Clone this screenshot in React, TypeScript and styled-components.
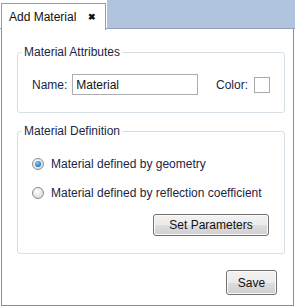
import React, { useState } from "react";
import styled, { createGlobalStyle } from "styled-components";

const GlobalStyle = createGlobalStyle`
  html, body {
    margin: 0;
    padding: 0;
    background: #fff;
  }
  body {
    font-family: "Liberation Sans", Arial, sans-serif;
    font-size: 12px;
    color: #1c2545;
  }
`;

const Window = styled.div`
  width: 295px;
  height: 306px;
  display: flex;
  flex-direction: column;
  box-sizing: border-box;
`;

const TabBar = styled.div`
  display: flex;
  height: 29px;
  flex-shrink: 0;
  padding-top: 3px;
  padding-left: 1px;
  box-sizing: border-box;
  background: linear-gradient(#ffffff 0, #ffffff 0) no-repeat left / 107px 100%,
    #b0c4de;
  border-bottom: 1px solid #8fa0b8;
`;

const Tab = styled.div`
  width: 105px;
  height: 27px;
  box-sizing: border-box;
  background: #fff;
  border: 1px solid #9a9a9a;
  border-bottom: none;
  display: flex;
  align-items: center;
  padding: 0 0 0 7px;
  gap: 12px;
  color: #111;
  position: relative;
  z-index: 1;
  margin-bottom: -1px;
`;

const CloseGlyph = styled.span`
  font-weight: bold;
  font-size: 9px;
  line-height: 1;
  color: #111;
  cursor: pointer;
  padding-top: 1px;
`;

const Panel = styled.div`
  flex: 1;
  margin: 0 1px 0 1px;
  border: 1px solid #8e8e8e;
  border-top: none;
  background: #fff;
  display: flex;
  flex-direction: column;
  padding: 16px 8px 0 15px;
`;

const Group = styled.fieldset<{ $top?: number }>`
  margin: ${(p) => p.$top ?? 0}px 0 0 0;
  padding: 15px 14px 17px 14px;
  border: 1px solid #d5dfe5;
  border-radius: 3px;
  min-width: 0;
`;

const Legend = styled.legend`
  padding: 0 2px;
  margin-left: -10px;
  line-height: 14px;
  color: #1c2545;
`;

const Row = styled.div`
  display: flex;
  align-items: center;
`;

const Label = styled.label`
  margin-right: 5px;
`;

const TextInput = styled.input`
  width: 126px;
  height: 21px;
  box-sizing: border-box;
  border: 1px solid #abadb3;
  padding: 0 3px;
  font-family: inherit;
  font-size: 12px;
  color: #111;
  outline: none;
`;

const Spacer = styled.div`
  flex: 1;
`;

const ColorSwatch = styled.div<{ $color: string }>`
  width: 16px;
  height: 16px;
  box-sizing: border-box;
  border: 1px solid #a9a9a9;
  background: ${(p) => p.$color};
  margin-left: 1px;
`;

const RadioList = styled.div`
  display: flex;
  flex-direction: column;
  gap: 13px;
  padding-top: 3px;
`;

const RadioRow = styled.label`
  display: flex;
  align-items: center;
  height: 16px;
  gap: 7px;
  cursor: pointer;
`;

const RadioDot = styled.span<{ $checked: boolean }>`
  width: 12px;
  height: 12px;
  box-sizing: border-box;
  border-radius: 50%;
  border: 1px solid #8d8d8d;
  background: radial-gradient(circle at 40% 35%, #ffffff 0, #e6e6e6 55%, #cfcfcf 100%);
  display: flex;
  align-items: center;
  justify-content: center;

  &::after {
    content: "";
    display: ${(p) => (p.$checked ? "block" : "none")};
    width: 6px;
    height: 6px;
    border-radius: 50%;
    background: radial-gradient(circle at 40% 35%, #7fd0f5 0, #2a8ad4 55%, #0d4f8f 100%);
  }
`;

const ButtonBar = styled.div<{ $top?: number; $right?: number }>`
  display: flex;
  justify-content: flex-end;
  margin-top: ${(p) => p.$top ?? 0}px;
  margin-right: ${(p) => p.$right ?? 0}px;
`;

const Button = styled.button<{ $w: number; $h: number }>`
  width: ${(p) => p.$w}px;
  height: ${(p) => p.$h}px;
  box-sizing: border-box;
  border: 1px solid #707070;
  border-radius: 3px;
  background: linear-gradient(#f2f2f2 0%, #ebebeb 50%, #dddddd 51%, #cfcfcf 100%);
  box-shadow: inset 0 0 0 1px #fbfbfb;
  font-family: inherit;
  font-size: 12px;
  color: #111;
  padding: 0;
  cursor: pointer;
`;

export default function App() {
  const [mode, setMode] = useState("geometry");
  const [name, setName] = useState("Material");

  return (
    <>
      <GlobalStyle />
      <Window>
        <TabBar>
          <Tab>
            Add Material
            <CloseGlyph>✖</CloseGlyph>
          </Tab>
        </TabBar>
        <Panel>
          <Group>
            <Legend>Material Attributes</Legend>
            <Row>
              <Label>Name:</Label>
              <TextInput value={name} onChange={(e) => setName(e.target.value)} />
              <Spacer />
              <Label>Color:</Label>
              <ColorSwatch $color="#ffffff" />
            </Row>
          </Group>
          <Group $top={11}>
            <Legend>Material Definition</Legend>
            <RadioList>
              <RadioRow onClick={() => setMode("geometry")}>
                <RadioDot $checked={mode === "geometry"} />
                Material defined by geometry
              </RadioRow>
              <RadioRow onClick={() => setMode("reflection")}>
                <RadioDot $checked={mode === "reflection"} />
                Material defined by reflection coefficient
              </RadioRow>
              <ButtonBar $right={1}>
                <Button $w={116} $h={22}>Set Parameters</Button>
              </ButtonBar>
            </RadioList>
          </Group>
          <ButtonBar $top={16} $right={8}>
            <Button $w={51} $h={25}>Save</Button>
          </ButtonBar>
        </Panel>
      </Window>
    </>
  );
}
